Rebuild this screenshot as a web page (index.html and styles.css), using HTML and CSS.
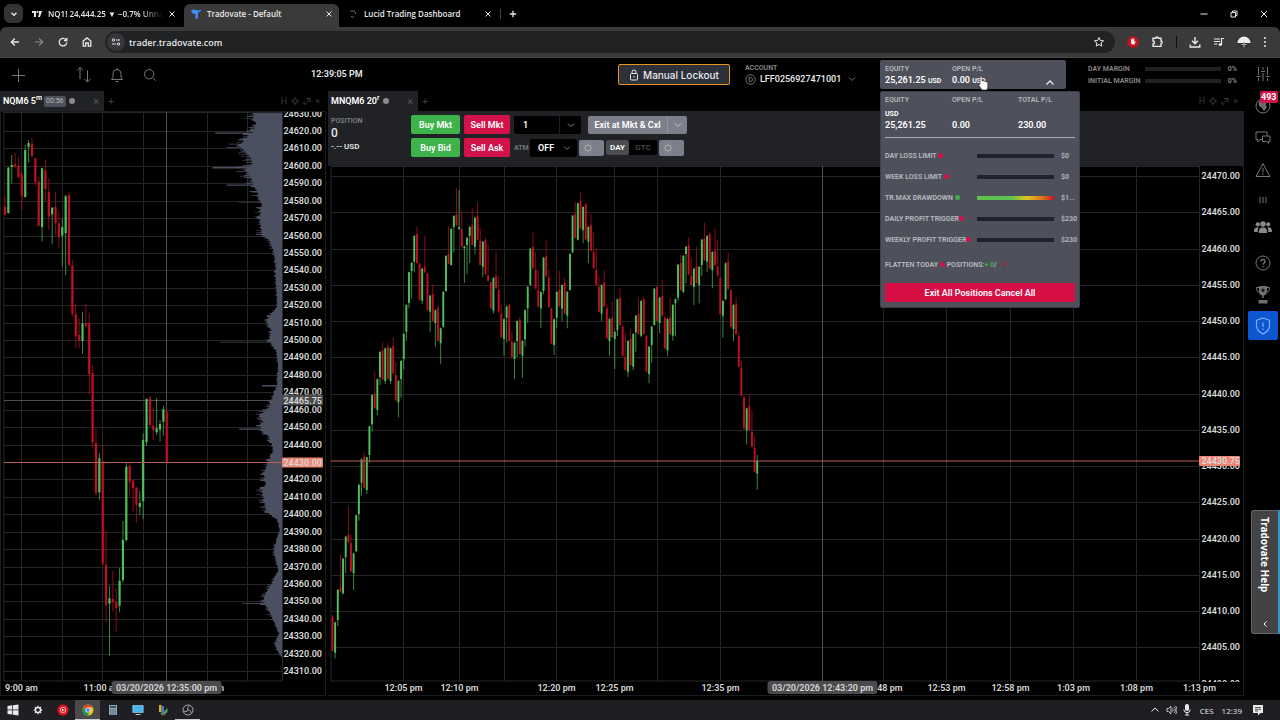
FILE: index.html
```html
<!DOCTYPE html>
<html lang="en">
<head>
  <meta charset="UTF-8">
  <title>Tradovate - Default</title>
  <link rel="stylesheet" href="styles.css">
</head>
<body>

<div class="tab-strip">
  <button class="tab-menu" aria-label="Search tabs"><svg width="8" height="8" viewBox="0 0 8 8"><path d="M1.5 2.8 4 5.2 6.500 2.8" stroke-width="1.400"/></svg></button>
  <div class="tab">
    <svg class="favicon" width="12" height="12" viewBox="0 0 12 12"><path class="solid" d="M1 3h4v6H3V5H1zM7.500 3H11L9 9H7l1-3z"/><circle class="solid" cx="6.300" cy="4" r="1"/></svg>
    <span class="tab-title faded">NQ1! 24,444.25 ▼ −0.7% Unna</span>
    <button class="tab-close" aria-label="Close tab"><svg width="8" height="8" viewBox="0 0 8 8"><path d="M1.500 1.500l5 5M6.500 1.500l-5 5"/></svg></button>
  </div>
  <div class="tab active">
    <svg class="favicon" width="12" height="12" viewBox="0 0 12 12"><path fill="#3f8df5" stroke="none" d="M1 2.500C3 1 5 1.500 6 2s3 .5 5-.5C11 3.500 9.500 4.500 8 4.500V9c0 1-1 2-2.500 2V6C3 6.500 1.500 5 1 2.500z"/></svg>
    <span class="tab-title">Tradovate - Default</span>
    <button class="tab-close" aria-label="Close tab"><svg width="8" height="8" viewBox="0 0 8 8"><path d="M1.500 1.500l5 5M6.500 1.500l-5 5"/></svg></button>
  </div>
  <div class="tab">
    <svg class="favicon" width="12" height="12" viewBox="0 0 12 12"><path stroke="#777" d="M3.500 3.500a3 3 0 0 1 5 2.500M4 8.500a3 3 0 0 0 3 .4"/></svg>
    <span class="tab-title">Lucid Trading Dashboard</span>
    <button class="tab-close" aria-label="Close tab"><svg width="8" height="8" viewBox="0 0 8 8"><path d="M1.500 1.500l5 5M6.500 1.500l-5 5"/></svg></button>
  </div>
  <button class="new-tab" aria-label="New tab"><svg width="8" height="8" viewBox="0 0 8 8"><path d="M4 .8v6.400M.8 4h6.400" stroke-width="1.300"/></svg></button>
  <div class="window-buttons">
    <button aria-label="Minimize"><svg width="8" height="8" viewBox="0 0 8 8"><path d="M.5 4h7"/></svg></button>
    <button aria-label="Restore"><svg width="8" height="8" viewBox="0 0 8 8"><path d="M1 2.500h4.500V7H1zM2.500 2.500V1H7v4.500H5.500"/></svg></button>
    <button aria-label="Close"><svg width="8" height="8" viewBox="0 0 8 8"><path d="M1 1l6 6M7 1L1 7"/></svg></button>
  </div>
</div>

<div class="browser-bar">
  <button aria-label="Back"><svg width="12" height="12" viewBox="0 0 12 12"><path d="M10 6H2.500M5.800 2.500 2.300 6l3.500 3.500" stroke-width="1.300"/></svg></button>
  <button class="dim" aria-label="Forward"><svg width="12" height="12" viewBox="0 0 12 12"><path d="M2 6h7.500M6.200 2.500 9.700 6 6.200 9.500" stroke-width="1.200"/></svg></button>
  <button aria-label="Reload"><svg width="12" height="12" viewBox="0 0 12 12"><path d="M9.300 4.200A3.800 3.800 0 1 0 9.800 6.500M9.800 1.800v2.800H7" stroke-width="1.300"/></svg></button>
  <button aria-label="Home"><svg width="12" height="12" viewBox="0 0 12 12"><path d="M2.200 5 6 1.900 9.800 5v5.200H7.300V7H4.700v3.200H2.200z" stroke-width="1.300"/></svg></button>
  <div class="address">
    <span class="site-info"><svg width="10" height="10" viewBox="0 0 10 10"><circle cx="2.500" cy="3" r="1.200"/><path d="M5 3h4M1 7h4"/><circle cx="7.500" cy="7" r="1.200"/></svg></span>
    <input type="text" value="trader.tradovate.com" aria-label="Address">
    <button aria-label="Bookmark"><svg width="12" height="12" viewBox="0 0 12 12"><path d="M6 1.500l1.300 3 3.200.3-2.400 2.100.7 3.200L6 8.400 3.200 10.100l.7-3.200L1.500 4.800l3.200-.3z"/></svg></button>
  </div>
  <div class="extensions">
    <button aria-label="Blocker"><svg width="12" height="12" viewBox="0 0 12 12"><path fill="#c4121d" stroke="none" d="M3.700.5h4.600l3.200 3.200v4.600l-3.200 3.200H3.700L.5 8.300V3.700z"/><path class="solid" d="M4 5V3.300h.8V2.700h.8v-.4h.8v.5h.9V6l.8-.9.7.5L7.500 8.500H4.800C4 7.500 4 6 4 5z"/></svg></button>
    <button aria-label="Extensions"><svg width="13" height="12" viewBox="0 0 13 12"><path d="M2 2.200h2.800a1.200 1.200 0 0 1 2.400 0H10V5a1.200 1.200 0 0 1 0 2.400v3H2V8a1.400 1.400 0 0 0 0-3z" stroke-width="1.400"/></svg></button>
    <span class="divider"></span>
    <button aria-label="Downloads"><svg width="12" height="12" viewBox="0 0 12 12"><path d="M6 1v6.500M3 4.800l3 3 3-3M1.200 8.500V11h9.600V8.500" stroke-width="1.400"/></svg></button>
    <button aria-label="Media"><svg width="12" height="12" viewBox="0 0 12 12"><path d="M1 3h6M1 5.500h6M1 8h3.500M8.500 8.500V2.500H11" stroke-width="1.200"/><circle class="solid" cx="7.300" cy="8.600" r="1.500"/></svg></button>
    <button aria-label="Profile"><svg width="14" height="14" viewBox="0 0 14 14"><circle cx="7" cy="7" r="6.500" fill="#333" stroke="none"/><path fill="#eee" stroke="none" d="M.5 8a6.500 6.500 0 0 1 13 0z"/><path d="M7 7v5.500M4.500 9.500h5" stroke="#aaa"/></svg></button>
    <button aria-label="Menu"><svg width="4" height="12" viewBox="0 0 4 12"><circle class="solid" cx="2" cy="2" r="1"/><circle class="solid" cx="2" cy="6" r="1"/><circle class="solid" cx="2" cy="10" r="1"/></svg></button>
  </div>
</div>

<div class="app">
  <main class="workspace">
    <header class="app-header">
      <button class="tool add" aria-label="Add module"><svg width="15" height="15" viewBox="0 0 15 15"><path d="M7.500 1v13M1 7.500h13"/></svg></button>
      <button class="tool" aria-label="Orders"><svg width="16" height="18" viewBox="0 0 16 18"><path d="M4 13V1.500M1 4.500l3-3 3 3M11.500 4.500V16M8.500 13l3 3 3-3"/></svg></button>
      <button class="tool" aria-label="Alerts"><svg width="14" height="16" viewBox="0 0 14 16"><path d="M1.500 12.500 3 10.500V6.500a4 4 0 0 1 8 0v4l1.500 2zM7 2.500V1M5.500 14.500h3"/></svg></button>
      <button class="tool" aria-label="Search"><svg width="14" height="14" viewBox="0 0 14 14"><circle cx="6.200" cy="6.200" r="4.700"/><path d="M9.700 9.700l3 3"/></svg></button>
      <time class="clock">12:39:05 PM</time>
      <button class="lockout"><svg width="10" height="12" viewBox="0 0 10 12"><rect x="1.500" y="4.500" width="7" height="6.500" rx="1"/><path d="M3 4.500V3a2 2 0 0 1 4 0v1.500M5 7v1.500"/></svg>Manual Lockout</button>
      <div class="account">
        <label for="account">ACCOUNT</label>
        <div class="account-row">
          <svg width="11" height="11" viewBox="0 0 11 11"><circle cx="5.500" cy="5.500" r="4.700"/><path d="M4.200 3.500h1.300a2 2 0 0 1 0 4H4.200z"/></svg>
          <select id="account"><option>LFF0256927471001</option></select>
          <svg class="chev" width="8" height="6" viewBox="0 0 8 6"><path d="M1 1.500l3 3 3-3"/></svg>
        </div>
      </div>
      <div class="equity-wrap">
        <button class="equity" aria-expanded="true">
          <span class="equity-cell"><small>EQUITY</small><b>25,261.25 <i>USD</i></b></span>
          <span class="equity-cell"><small>OPEN P/L</small><b>0.00 <i>USD</i></b></span>
          <svg width="10" height="7" viewBox="0 0 10 7"><path d="M1.500 5.500 5 2l3.500 3.500" stroke-width="1.300"/></svg>
        </button>
        <svg class="pointer" width="12" height="15" viewBox="0 0 12 15"><path fill="#fff" stroke="#222" stroke-width=".6" d="M2 1.500c0-1.200 2-1.200 2 0V5c.5-.5 1.800-.4 2 .4.600-.4 1.700-.2 1.900.6.700-.3 1.800 0 1.900 1v3.500L9 14H4L1 9.500C.3 8.500 1.200 7.700 2 8.400z"/></svg>
        <section class="equity-menu">
          <div class="totals">
            <span>EQUITY</span><span>OPEN P/L</span><span>TOTAL P/L</span>
            <b class="currency">USD</b>
            <b>25,261.25</b><b>0.00</b><b>230.00</b>
          </div>
          <div class="limits">
            <div class="limit"><span>DAY LOSS LIMIT <i class="dot"></i></span><span class="bar"></span><span>$0</span></div>
            <div class="limit"><span>WEEK LOSS LIMIT <i class="dot"></i></span><span class="bar"></span><span>$0</span></div>
            <div class="limit"><span>TR.MAX DRAWDOWN <i class="dot on"></i></span><span class="bar heat"></span><span>$1...</span></div>
            <div class="limit"><span>DAILY PROFIT TRIGGER<i class="dot"></i></span><span class="bar"></span><span>$230</span></div>
            <div class="limit"><span>WEEKLY PROFIT TRIGGER<i class="dot"></i></span><span class="bar"></span><span>$230</span></div>
          </div>
          <p class="flatten">FLATTEN TODAY <i class="dot"></i> POSITIONS:<em class="up">+ 0</em>/ <em class="down">- 0</em></p>
          <button class="exit-all">Exit All Positions Cancel All</button>
        </section>
      </div>
      <div class="margins">
        <div class="margin-row"><span>DAY MARGIN</span><span class="bar"></span><span>0%</span></div>
        <div class="margin-row"><span>INITIAL MARGIN</span><span class="bar"></span><span>0%</span></div>
      </div>
    </header>

    <div class="panels">
      <section class="panel panel-left">
        <div class="panel-tabs">
          <div class="panel-tab"><b>NQM6 5<sup>m</sup></b><span class="countdown">00:56</span><i class="status"></i><button aria-label="Close chart">×</button></div>
          <button class="add-tab" aria-label="Add chart">+</button>
          <div class="panel-tools"><button aria-label="History">H</button><button aria-label="Settings"><svg width="8" height="8" viewBox="0 0 8 8"><circle cx="4" cy="4" r="2.300"/><path d="M4 0v1.500M4 6.500V8M0 4h1.500M6.500 4H8"/></svg></button><button aria-label="Detach"><svg width="8" height="8" viewBox="0 0 8 8"><path d="M3 1.500h4V5M7 1.500 3.500 5M1 4.500V7h2.500"/></svg></button><button aria-label="Close panel">×</button></div>
        </div>
        <div class="chart" id="chart-nq"></div>
      </section>

      <section class="panel panel-right">
        <div class="panel-tabs">
          <div class="panel-tab short"><b>MNQM6 20<sup>r</sup></b><i class="status"></i><button aria-label="Close chart">×</button></div>
          <button class="add-tab" aria-label="Add chart">+</button>
          <div class="panel-tools"><button aria-label="History">H</button><button aria-label="Settings"><svg width="8" height="8" viewBox="0 0 8 8"><circle cx="4" cy="4" r="2.300"/><path d="M4 0v1.500M4 6.500V8M0 4h1.500M6.500 4H8"/></svg></button><button aria-label="Detach"><svg width="8" height="8" viewBox="0 0 8 8"><path d="M3 1.500h4V5M7 1.500 3.500 5M1 4.500V7h2.500"/></svg></button><button aria-label="Close panel">×</button></div>
        </div>
        <div class="order-bar">
          <div class="position"><small>POSITION</small><b>0</b><span>-.-- USD</span></div>
          <div class="orders">
            <div class="order-row">
              <button class="buy">Buy Mkt</button>
              <button class="sell">Sell Mkt</button>
              <div class="qty"><input type="text" value="1" aria-label="Quantity"><button aria-label="Quantity presets"><svg width="8" height="6" viewBox="0 0 8 6"><path d="M1 1.500l3 3 3-3"/></svg></button></div>
              <div class="exit"><button>Exit at Mkt &amp; Cxl</button><button class="more" aria-label="More exits"><svg width="8" height="6" viewBox="0 0 8 6"><path d="M1 1.500l3 3 3-3"/></svg></button></div>
            </div>
            <div class="order-row">
              <button class="buy">Buy Bid</button>
              <button class="sell">Sell Ask</button>
              <div class="atm">
                <label for="atm">ATM</label>
                <div class="atm-select"><select id="atm"><option>OFF</option></select><svg class="chev" width="8" height="6" viewBox="0 0 8 6"><path d="M1 1.500l3 3 3-3"/></svg></div>
                <button class="gear" aria-label="ATM settings"><svg width="10" height="10" viewBox="0 0 10 10"><circle cx="5" cy="5" r="2.800"/><path d="M5 .5V2M5 8v1.500M.5 5H2M8 5h1.500M1.800 1.800l1 1M7.200 7.200l1 1M8.200 1.800l-1 1M2.800 7.200l-1 1"/></svg></button>
                <div class="tif"><button class="picked">DAY</button><button>GTC</button></div>
                <button class="gear" aria-label="Order settings"><svg width="10" height="10" viewBox="0 0 10 10"><circle cx="5" cy="5" r="2.800"/><path d="M5 .5V2M5 8v1.500M.5 5H2M8 5h1.500M1.800 1.800l1 1M7.200 7.200l1 1M8.200 1.800l-1 1M2.800 7.200l-1 1"/></svg></button>
              </div>
            </div>
          </div>
        </div>
        <div class="chart" id="chart-mnq"></div>
      </section>
    </div>
  </main>

  <nav class="side">
    <button aria-label="Preferences"><svg width="14" height="16" viewBox="0 0 14 16"><path d="M2.500 1v8M2.500 12v3M7 1v3M7 7v8M11.500 1v8M11.500 12v3M.5 10.500h4M5 5.500h4M9.500 10.500h4"/></svg></button>
    <button aria-label="News"><svg width="16" height="16" viewBox="0 0 16 16"><circle cx="8" cy="8" r="7"/><path fill="#6a6a6a" d="M4 4l4-1 3 1.500L10 7l1.500 2L9 12.500 7.500 9.500 4.500 8z"/></svg><span class="badge">493</span></button>
    <button aria-label="Chat"><svg width="16" height="14" viewBox="0 0 16 14"><path d="M7 8.500H5L3 11V8.500H1V1h11v3.500M7.500 5H15v5.500h-1.500v2L11.500 10.500h-4z"/></svg></button>
    <button aria-label="Warnings"><svg width="16" height="16" viewBox="0 0 16 16"><path d="M8 1.500 15 14.500H1zM8 6v4.500M8 11.500v1.500"/></svg></button>
    <button class="low" aria-label="Columns"><svg width="8" height="8" viewBox="0 0 8 8"><path d="M1 1v6M4 1v6M7 1v6"/></svg></button>
    <button class="low" aria-label="Community"><svg width="18" height="12" viewBox="0 0 18 12"><g fill="#8a8a8a" stroke="none"><circle cx="9" cy="3" r="2.700"/><circle cx="3.800" cy="3.300" r="2.100"/><circle cx="14.200" cy="3.300" r="2.100"/><path d="M4.800 12c0-4 1-5.500 4.200-5.500s4.200 1.500 4.200 5.500zM0 11c0-3.500 1-4.800 4.500-4.800C3.800 7.500 3.800 9 3.800 11zM18 11c0-3.500-1-4.800-4.500-4.800.7 1.300.7 2.800.7 4.800z"/></g></svg></button>
    <button class="mid" aria-label="Help"><svg width="16" height="16" viewBox="0 0 16 16"><circle cx="8" cy="8" r="7"/><path d="M6 6.500a2 2 0 1 1 2.800 1.800C8 8.700 8 9 8 9.800M8 11v1.300" stroke-width="1.300"/></svg></button>
    <button class="cup" aria-label="Leaderboard"><svg width="16" height="19" viewBox="0 0 16 19"><g fill="#6f6f6f" stroke="none"><path d="M4 1h8v5.500a4 4 0 0 1-3.200 4V13H7.200v-2.500A4 4 0 0 1 4 6.500zM3.500 15h9v3.500h-9z"/></g><path d="M4 2.500H1.500c0 3 .8 4.500 3 4.700M12 2.500h2.500c0 3-.8 4.500-3 4.700"/><path fill="#111" stroke="none" d="M8 3l.7 1.400 1.500.2-1.100 1 .3 1.500L8 6.400l-1.400.7.3-1.500-1.100-1 1.500-.2z"/></svg></button>
    <button class="shield" aria-label="Risk"><svg width="16" height="18" viewBox="0 0 16 18"><path d="M8 1l6.500 2.300v5.200c0 4-2.500 6.500-6.500 8.500-4-2-6.500-4.500-6.500-8.500V3.300zM8 5.500v4.500M8 11.500V13" stroke-width="1.200"/></svg></button>
  </nav>
  <button class="help-tab"><span>Tradovate Help</span><svg width="8" height="8" viewBox="0 0 8 8"><path d="M5.500 1.500 3 4l2.500 2.500"/></svg></button>
</div>

<footer class="taskbar">
  <button aria-label="Start"><svg width="12" height="12" viewBox="0 0 12 12"><path class="solid" d="M.5 2 5.300 1.300v4.300H.5zM6 1.200 11.500.5v5.100H6zM.5 6.300h4.800v4.300L.5 10zM6 6.300h5.500v5.200L6 10.700z"/></svg></button>
  <button aria-label="Settings"><svg width="10" height="10" viewBox="0 0 10 10"><circle cx="5" cy="5" r="2.500" stroke-width="1.400"/><path d="M5 .8v1.500M5 7.700v1.500M.8 5h1.500M7.700 5h1.500M2 2l1 1M7 7l1 1M8 2 7 3M3 7 2 8" stroke-width="1.300"/></svg></button>
  <button aria-label="Music"><svg width="12" height="12" viewBox="0 0 12 12"><circle cx="6" cy="6" r="5.500" fill="#e8101c" stroke="none"/><circle cx="6" cy="6" r="2.700" stroke-width=".8"/><path class="solid" d="M5 4.500 7.500 6 5 7.500z"/></svg></button>
  <button class="current" aria-label="Chrome"><svg width="12" height="12" viewBox="0 0 12 12"><circle cx="6" cy="6" r="5.500" fill="#f4c20d" stroke="none"/><path fill="#db4437" stroke="none" d="M1.200 3.300A5.500 5.500 0 0 1 10.800 3.300H6L3.700 7.300z"/><path fill="#0f9d58" stroke="none" d="M1.200 3.300A5.500 5.500 0 0 0 5.700 11.500L8.200 7.300H3.700z"/><circle cx="6" cy="6" r="2.300" fill="#4285f4" stroke="#fff" stroke-width=".8"/></svg></button>
  <button aria-label="Calculator"><svg width="10" height="12" viewBox="0 0 10 12"><rect x="1" y="1" width="8" height="10" fill="#8fa5b2" stroke="none"/><path d="M2 3h6" stroke="#263b47" stroke-width="1.500"/><path d="M2 6h6M2 8h6M2 10h6" stroke="#3d6478" stroke-dasharray="1.500 .7"/></svg></button>
  <button aria-label="Computer"><svg width="12" height="12" viewBox="0 0 12 12"><path fill="#46b7ee" stroke="#a8dcf5" stroke-width=".6" d="M.8 1.500h10.400v7H.8z"/><path d="M3.500 10.500h5" stroke="#b9c9d1"/></svg></button>
  <button aria-label="Charts"><svg width="12" height="12" viewBox="0 0 12 12"><path fill="#e1a63c" stroke="none" d="M2 1h2.500v7H2z"/><path fill="#3f7fb6" stroke="none" d="M4.500 2h2.500v8H4.500z"/><path fill="#52a55c" stroke="none" d="M7 7.500 10.500 4v4L7 11.500z"/><path fill="#e1c43c" stroke="none" d="M3 8l4 3.500L5 11z"/></svg></button>
  <button class="open" aria-label="Recorder"><svg width="12" height="12" viewBox="0 0 12 12"><circle cx="6" cy="6" r="5" stroke="#aaa"/><path d="M6 6c-1-2 0-3.500 1.500-4M6 6c2 0 3.200 1 3 3M6 6c-1 2-3 2-4 1" stroke="#aaa"/></svg></button>
  <div class="tray">
    <button aria-label="Hidden icons"><svg width="10" height="8" viewBox="0 0 10 8"><path d="M1.500 5.500 5 2l3.500 3.500"/></svg></button>
    <button aria-label="Volume"><svg width="11" height="10" viewBox="0 0 11 10"><path d="M1 3.500h1.500L5 1.200v7.600L2.500 6.500H1zM6.500 3.500a2 2 0 0 1 0 3M8 2a4 4 0 0 1 0 6M9.500 1a6 6 0 0 1 0 8" stroke-width=".8"/></svg></button>
    <button aria-label="Microphone"><svg width="8" height="12" viewBox="0 0 8 12"><rect class="solid" x="2" y="0" width="4" height="7" rx="2"/><path d="M.8 5.500a3.200 3.200 0 0 0 6.400 0M4 8.700V11M2 11h4"/></svg></button>
    <span>CES</span>
    <time>12:39</time>
    <button aria-label="Notifications"><svg width="12" height="12" viewBox="0 0 12 12"><path class="solid" d="M1 1h10v8H8.500L6 11.500V9H1z"/><path d="M3 3.500h6M3 5.300h6M3 7h3" stroke="#333" stroke-width=".8"/></svg></button>
  </div>
</footer>

<script src="chart.js"></script>
</body>
</html>
```

FILE: styles.css
```css
* {
  box-sizing: border-box;
}
body {
  margin: 0;
  height: 100vh;
  display: flex;
  flex-direction: column;
  overflow: hidden;
  background: #000;
  color: #e8e8e8;
  font-family: Roboto, "Liberation Sans", sans-serif;
  font-size: 9px;
}
button, input, select {
  font: inherit;
  color: inherit;
  background: none;
  border: 0;
  padding: 0;
  margin: 0;
}
button {
  display: flex;
  align-items: center;
  justify-content: center;
  cursor: pointer;
  white-space: nowrap;
}
select {
  appearance: none;
}
input {
  min-width: 0;
}
svg {
  display: block;
  flex: none;
  fill: none;
  stroke: currentColor;
}
.solid {
  fill: currentColor;
  stroke: none;
}

/* browser */
.tab-strip {
  display: flex;
  align-items: center;
  height: 27px;
  flex: none;
  padding-left: 4px;
  font-family: "Open Sans", sans-serif;
  font-size: 8px;
  font-weight: 600;
}
.tab-menu {
  width: 19px;
  height: 19px;
  border-radius: 6px;
  background: #333;
}
.tab {
  display: flex;
  align-items: center;
  gap: 5px;
  width: 161px;
  height: 23px;
  margin-top: 4px;
  padding: 0 8px 4px;
}
.tab.active {
  background: #3a3a3a;
  border-radius: 6px 6px 0 0;
  width: 155px;
  padding: 0 6px 4px;
}
.tab-title {
  flex: 1;
  overflow: hidden;
  white-space: nowrap;
}
.faded {
  mask-image: linear-gradient(90deg, #000 80%, transparent);
}
.new-tab {
  padding-left: 8px;
  border-left: 1px solid #444;
  height: 10px;
}
.window-buttons {
  display: flex;
  gap: 22px;
  margin-left: auto;
  padding-right: 12px;
}
.browser-bar {
  display: flex;
  align-items: center;
  gap: 12px;
  height: 31px;
  flex: none;
  padding: 0 13px 0 9px;
  background: #3a3a3a;
  border-bottom: 1px solid #4b4b4b;
  border-radius: 6px 6px 0 0;
}
.dim {
  color: #888;
}
.address {
  display: flex;
  align-items: center;
  flex: 1;
  height: 22px;
  border-radius: 11px;
  background: #202224;
  padding: 0 10px 0 2px;
}
.site-info {
  padding: 4px;
  border-radius: 50%;
  background: #35373a;
}
.address input {
  flex: 1;
  margin-left: 4px;
  font-family: "Open Sans", sans-serif;
  font-size: 9px;
  font-weight: 600;
}
.extensions {
  display: flex;
  align-items: center;
  gap: 12px;
}
.extensions .divider {
  width: 1px;
  height: 12px;
  background: #111;
}

/* app header */
.app {
  position: relative;
  display: flex;
  flex: 1;
  min-height: 0;
}
.workspace {
  flex: 1;
  min-width: 0;
  display: flex;
  flex-direction: column;
}
.app-header {
  display: flex;
  align-items: flex-start;
  height: 33px;
  flex: none;
  padding: 2px 7px 0 11px;
}
.tool {
  width: 15px;
  height: 30px;
  margin-right: 18px;
  color: #777;
}
.tool.add {
  margin-right: 50px;
}
.clock {
  margin-left: 136px;
  font-size: 9px;
  font-weight: 600;
  line-height: 29px;
}
.lockout {
  gap: 4px;
  width: 112px;
  height: 21px;
  margin: 4px 15px 0 auto;
  border: 1px solid #e8931f;
  border-radius: 2px;
  background: #2d313c;
  font-family: Inter, sans-serif;
  font-size: 10px;
  font-weight: 500;
}
.account {
  width: 111px;
  margin-right: 24px;
  padding-top: 4px;
}
.account label, .equity small, .totals span, .position small {
  display: block;
  font-size: 7px;
  line-height: 9px;
  font-weight: 600;
  color: #888;
}
.account-row {
  display: flex;
  align-items: center;
  gap: 4px;
  color: #777;
}
.account-row select {
  width: 86px;
  font-size: 9px;
  line-height: 12px;
  font-weight: 500;
  color: #eee;
}
.equity-wrap {
  position: relative;
  margin-right: 22px;
}
.equity {
  width: 186px;
  height: 29px;
  padding: 3px 11px 0 5px;
  border-radius: 2px;
  background: #4e515b;
  justify-content: flex-start;
  text-align: left;
}
.equity-cell {
  width: 67px;
}
.equity small, .totals span {
  color: #b4b6bc;
}
.equity b {
  display: block;
  font-size: 9px;
  line-height: 13px;
  font-weight: 600;
  color: #fff;
}
.equity i {
  font-size: 7px;
  font-style: normal;
}
.equity svg {
  margin: 12px 0 0 auto;
}
.pointer {
  position: absolute;
  left: 98px;
  top: 16px;
  z-index: 5;
}
.equity-menu {
  position: absolute;
  left: 0;
  top: 31px;
  width: 200px;
  z-index: 4;
  padding: 4px 4px 5px;
  border-radius: 2px;
  background: #4e515b;
  border: 1px solid #3e4047;
}
.totals {
  display: grid;
  grid-template-columns: 67px 66px 1fr;
  padding-bottom: 6px;
  border-bottom: 1px solid #a9abb2;
}
.totals b {
  font-size: 9px;
  line-height: 12px;
  font-weight: 600;
  color: #fff;
}
.totals .currency {
  grid-column: 1 / -1;
  margin-top: 4px;
  font-size: 7px;
  line-height: 10px;
  font-weight: 700;
}
.limits {
  padding-top: 7px;
}
.limit {
  display: grid;
  grid-template-columns: 92px 77px 1fr;
  align-items: center;
  height: 21px;
  font-size: 7px;
  font-weight: 600;
  color: #b9bbc1;
  white-space: nowrap;
}
.limit span:last-child {
  padding-left: 7px;
}
.bar {
  height: 4px;
  background: #20222c;
}
.heat {
  background: linear-gradient(90deg, #5fc24e 45%, #e0c51c 65%, #e0731c 85%, #c0162a);
}
.dot {
  display: inline-block;
  width: 5px;
  height: 5px;
  border-radius: 50%;
  background: #d31249;
}
.dot.on {
  background: #3bb04a;
}
.flatten {
  margin: 10px 0 13px;
  font-size: 7px;
  line-height: 10px;
  font-weight: 600;
  color: #b9bbc1;
}
.flatten em {
  font-style: normal;
}
.up {
  color: #3bb04a;
}
.down {
  color: #a3283c;
}
.exit-all {
  width: 100%;
  height: 19px;
  background: #d70f45;
  color: #fff;
  font-size: 9px;
  font-weight: 600;
}
.margins {
  width: 149px;
  padding-top: 3px;
}
.margin-row {
  display: flex;
  align-items: center;
  height: 12px;
  font-size: 7px;
  font-weight: 600;
  color: #888;
}
.margin-row span:first-child {
  width: 57px;
}
.margin-row .bar {
  flex: 1;
  background: #202124;
}
.margin-row span:last-child {
  width: 16px;
  text-align: right;
}

/* panels */
.panels {
  display: flex;
  gap: 2px;
  flex: 1;
  min-height: 0;
  padding-bottom: 4px;
}
.panel {
  display: flex;
  flex-direction: column;
  min-width: 0;
}
.panel-left {
  flex: 326;
}
.panel-right {
  flex: 916;
}
.panel-tabs {
  display: flex;
  height: 20px;
  flex: none;
}
.panel-tab {
  display: flex;
  align-items: center;
  gap: 2px;
  width: 104px;
  padding: 0 5px 0 3px;
  background: #212226;
}
.panel-tab.short {
  width: 90px;
}
.panel-tab b {
  font-size: 9px;
  font-weight: 600;
  color: #fff;
  white-space: nowrap;
}
.panel-tab sup {
  font-size: 7px;
  line-height: 0;
}
.panel-tab button, .add-tab {
  margin-left: auto;
  color: #55565a;
  font-size: 11px;
}
.add-tab {
  margin-left: 4px;
  color: #3c3c3e;
}
.countdown {
  padding: 0 2px;
  border-radius: 2px;
  background: #4e515b;
  color: #b4b6bc;
  font-size: 7px;
  line-height: 11px;
}
.status {
  width: 6px;
  height: 6px;
  margin-left: 1px;
  border-radius: 50%;
  background: #8b8b8d;
}
.panel-tools {
  display: flex;
  gap: 4px;
  margin-left: auto;
  padding-right: 6px;
  color: #3c3c3c;
}
.order-bar {
  display: flex;
  height: 54px;
  flex: none;
  padding: 4px 3px 0;
  background: #212226;
}
.position {
  width: 80px;
}
.position small {
  margin-top: 2px;
  font-weight: 500;
}
.position b {
  display: block;
  font-size: 12px;
  line-height: 15px;
  font-weight: 500;
}
.position span {
  font-size: 8px;
  line-height: 11px;
  font-weight: 600;
}
.orders {
  display: flex;
  flex-direction: column;
  gap: 4px;
}
.order-row {
  display: flex;
  align-items: center;
  gap: 4px;
  color: #fff;
  font-size: 9px;
  font-weight: 600;
}
.buy, .sell {
  width: 49px;
  height: 19px;
  border-radius: 2px;
  background: #3eb34c;
}
.sell {
  width: 46px;
  background: #d31249;
}
.qty {
  display: flex;
  width: 67px;
  height: 18px;
  border-radius: 2px;
  background: #000;
}
.qty input {
  flex: 1;
  padding-left: 9px;
}
.qty button, .more {
  width: 22px;
  color: #888;
  border-left: 1px solid #212226;
}
.exit {
  display: flex;
  height: 18px;
  margin-left: 3px;
  border-radius: 2px;
  background: #7d808a;
}
.exit button:first-child {
  width: 79px;
}
.exit .more {
  width: 20px;
  color: #c4c6cc;
  border-color: #93959d;
}
.atm {
  display: flex;
  align-items: center;
  gap: 2px;
}
.atm label {
  width: 14px;
  font-size: 7px;
  color: #77787c;
}
.atm-select {
  display: flex;
  align-items: center;
  width: 47px;
  height: 18px;
  padding: 0 6px 0 8px;
  border-radius: 2px;
  background: #000;
}
.atm-select select {
  flex: 1;
}
.chev {
  color: #777;
  pointer-events: none;
}
.gear {
  width: 25px;
  height: 16px;
  padding-right: 8px;
  border-radius: 2px;
  background: #7d808a;
  color: #a5a7af;
}
.tif {
  display: flex;
  width: 51px;
  height: 15px;
  border-radius: 2px;
  background: #000;
  font-size: 8px;
}
.tif button {
  flex: 1;
  color: #4a4a4c;
}
.tif .picked {
  flex: none;
  width: 23px;
  border-radius: 2px;
  background: #4b4c50;
  color: #fff;
}
.chart {
  flex: 1;
  min-height: 0;
  overflow: hidden;
  border: 1px solid #1b1c1e;
}
.panel-right .chart {
  border-left: 0;
}

/* chart drawing */
.chart svg {
  stroke: none;
}
.grid {
  stroke: #262626;
}
.cross {
  stroke: #505050;
}
.last {
  stroke: #b5615a;
}
.candle-up {
  stroke: #4fc15a;
}
.candle-down {
  stroke: #c20f22;
}
.wick {
  opacity: .7;
}
.profile {
  fill: #4a5060;
}
.axis-bg {
  fill: #000;
}
.chart text {
  fill: #d8d8d8;
  font-size: 9px;
  font-weight: 600;
}
.tag-last {
  fill: #ee8474;
}
.tag-cross {
  fill: #4b4b4d;
}

/* right sidebar */
.side {
  width: 36px;
  flex: none;
  padding: 0 2px 0 4px;
  color: #777;
}
.side button {
  position: relative;
  width: 30px;
  height: 32px;
}
.side .low {
  height: 27px;
}
.side .mid {
  margin-top: 7px;
}
.side .cup {
  height: 30px;
}
.side .shield {
  height: 29px;
  margin-top: 2px;
  border-radius: 2px;
  background: #0c56d0;
  color: #7fb0ff;
}
.badge {
  position: absolute;
  left: 12px;
  top: 1px;
  padding: 0 1px;
  border-radius: 2px;
  background: #d31249;
  color: #fff;
  font-size: 9px;
  line-height: 12px;
  font-weight: 700;
}
.help-tab {
  position: absolute;
  right: 0;
  bottom: 66px;
  width: 29px;
  height: 124px;
  flex-direction: column;
  justify-content: space-between;
  padding: 6px 0 5px;
  border: 1px solid #666;
  border-right: 2px solid #2f9cc9;
  border-radius: 3px 0 0 3px;
  background: #434345;
  color: #fff;
  font-family: "Noto Sans", sans-serif;
  font-size: 10px;
  font-weight: 700;
}
.help-tab span {
  writing-mode: vertical-rl;
}

/* taskbar */
.taskbar {
  display: flex;
  align-items: center;
  height: 20px;
  flex: none;
  background: #1f1f23;
  font-family: "Open Sans", sans-serif;
  font-size: 8px;
}
.taskbar > button {
  width: 25px;
  height: 20px;
}
.taskbar .current {
  background: #4a4a4d;
}
.taskbar .current, .taskbar .open {
  border-bottom: 1px solid #ccc;
}
.tray {
  display: flex;
  align-items: center;
  gap: 6px;
  margin-left: auto;
  padding-right: 16px;
}
.tray span {
  margin-left: 3px;
}
.tray time {
  margin: 0 4px 0 2px;
}
```

FILE: chart.js
```js
// Candle rows: [up, body top, body bottom, high, low], in thirds of a pixel
const UNIT = 3;

const nq = [
  [0,305,328,272,332],[1,188,324,185,326],[1,180,186,150,235],[0,178,185,145,190],[0,182,216,155,220],
  [0,207,273,200,315],[1,135,276,120,278],[1,114,126,105,172],[0,116,153,98,158],[0,160,232,158,243],
  [0,230,362,215,365],[1,190,366,188,410],[0,196,252,165,290],[0,260,335,220,375],[1,308,328,306,417],
  [0,306,355,260,390],[0,355,396,320,430],[1,366,392,340,485],[1,274,384,270,510],[0,270,480,262,485],
  [0,482,626,465,635],[0,628,694,595,730],[0,690,706,640,728],[1,655,708,620,747],[0,655,662,597,668],
  [0,655,808,625,870],[0,804,1012,780,1028],[0,1014,1165,970,1172],[1,1060,1162,1045,1185],[0,1070,1376,1020,1383],
  [0,1380,1500,1275,1552],[1,1480,1496,1442,1652],[0,1482,1492,1398,1520],[0,1492,1508,1450,1580],[1,1427,1502,1388,1522],
  [1,1305,1425,1248,1432],[1,1085,1305,1072,1310],[0,1083,1130,1072,1175],[0,1127,1150,1125,1220],[0,1148,1200,1145,1252],
  [1,1194,1206,1158,1230],[1,1005,1188,985,1242],[1,882,1012,880,1022],[0,880,960,872,965],[0,962,976,905,1005],
  [1,970,982,880,990],[1,957,974,945,1010],[1,913,950,902,992],[0,920,1072,915,1075]
];

const mnq = [
  [0,1355,1457,1350,1460],[1,1372,1463,1370,1480],[1,1275,1365,1272,1383],[0,1268,1280,1168,1282],[1,1181,1285,1179,1289],
  [1,1115,1177,1113,1225],[0,1110,1132,1023,1135],[0,1135,1219,1110,1221],[1,1165,1225,1163,1275],[1,1051,1159,1048,1161],
  [1,959,1047,957,1067],[1,883,953,880,992],[0,875,969,860,971],[1,877,975,875,987],[1,784,870,782,893],
  [1,690,778,688,800],[0,686,728,620,732],[1,643,735,640,750],[1,561,636,558,660],[0,556,642,532,646],
  [1,550,648,548,657],[0,545,642,533,644],[1,550,648,548,658],[0,543,625,516,628],[0,630,706,590,710],
  [1,648,712,645,757],[1,588,642,585,698],[1,507,582,504,614],[1,420,500,418,528],[1,322,414,320,430],
  [1,294,318,290,400],[1,213,290,210,322],[0,207,294,184,297],[0,296,404,293,407],[1,311,407,309,418],
  [0,305,322,213,324],[0,326,434,324,437],[1,392,440,390,502],[0,387,468,358,470],[1,436,474,433,545],
  [0,430,528,420,530],[1,490,535,488,597],[1,381,485,378,488],[1,273,378,270,380],[0,267,297,184,298],
  [1,192,300,188,302],[1,153,186,150,262],[0,148,180,70,184],[1,186,192,75,194],[0,192,245,136,248],
  [1,244,250,242,354],[1,218,240,216,328],[1,186,213,183,294],[0,180,240,130,242],[1,158,245,155,268],
  [0,152,224,112,226],[0,228,300,190,302],[1,230,305,228,337],[0,225,327,218,330],[0,332,348,240,350],
  [0,352,430,350,433],[1,339,437,336,446],[0,334,370,262,372],[0,375,440,333,444],[0,445,517,420,519],
  [1,463,522,460,572],[1,425,458,422,532],[0,420,528,417,530],[0,530,577,500,580],[1,534,582,530,642],
  [1,468,528,466,577],[0,464,567,457,569],[1,528,572,525,638],[1,436,523,433,545],[1,365,430,363,474],
  [1,251,360,249,362],[0,246,310,202,314],[0,315,370,262,374],[0,375,425,315,428],[1,381,430,379,490],
  [1,278,378,276,388],[0,273,332,223,338],[0,338,426,315,428],[0,430,535,428,537],[1,463,540,460,570],
  [1,381,458,379,490],[0,375,424,318,427],[1,360,431,358,468],[0,354,446,338,448],[1,381,452,378,490],
  [1,267,375,265,377],[1,152,262,150,264],[0,147,218,110,220],[1,115,224,113,226],[0,108,190,82,193],
  [1,126,195,124,235],[0,118,223,114,226],[1,186,230,183,294],[0,180,257,147,260],[0,262,310,200,313],
  [0,315,360,250,363],[0,366,440,334,443],[1,360,446,358,468],[0,352,424,316,427],[0,430,520,416,524],
  [1,462,528,460,572],[0,458,516,408,519],[1,501,522,498,612],[1,403,496,400,513],[0,398,480,370,482],
  [0,485,572,480,574],[0,576,615,505,618],[1,528,620,526,636],[0,522,600,490,603],[1,507,605,504,615],
  [1,452,502,450,560],[0,447,507,398,510],[1,408,512,405,517],[0,403,507,395,510],[0,512,620,510,623],
  [1,545,627,542,655],[1,485,540,482,594],[1,371,480,369,482],[0,366,468,362,470],[1,398,474,395,505],
  [0,393,452,345,456],[0,457,550,455,553],[1,462,556,460,572],[0,458,508,398,510],[1,420,512,417,527],
  [1,403,415,400,514],[1,299,398,297,407],[0,294,375,270,378],[1,273,381,270,384],[1,245,267,243,355],
  [0,240,328,218,331],[0,332,360,280,362],[1,311,366,308,420],[0,304,354,245,357],[1,306,360,303,415],
  [1,224,300,222,333],[0,220,285,173,288],[1,213,290,210,322],[0,207,310,203,313],[1,261,316,259,370],
  [0,257,300,190,303],[0,304,332,225,335],[0,338,447,336,449],[1,408,452,405,518],[1,295,403,292,405],
  [0,290,371,262,374],[0,376,485,374,488],[1,420,492,417,528],[0,416,507,397,510],[0,513,605,500,608],
  [0,609,692,588,694],[0,697,790,694,794],[1,730,795,728,838],[0,724,795,686,798],[0,801,845,736,847],
  [0,849,920,812,923],[1,888,926,870,974]
];

// Volume profile outline: [y, width], same units
const profile = [
  [20,88],[35,105],[50,92],[75,106],[100,120],[110,146],[122,150],[132,135],[150,115],[170,108],[187,130],
  [205,116],[230,104],[250,90],[290,72],[320,78],[350,78],[385,72],[400,44],[450,24],[540,20],[600,16],
  [640,56],[670,38],[703,46],[730,20],[780,13],[840,18],[880,38],[905,48],[925,82],[945,66],[965,78],[990,46],
  [1030,30],[1060,46],[1100,66],[1130,58],[1155,72],[1180,64],[1215,56],[1240,15],[1270,8],[1330,30],[1390,12],
  [1430,36],[1460,56],[1480,68],[1505,52],[1540,30],[1580,10],[1615,26],[1650,3]
];
const spikes = { 79: 200, 183: 208, 235: 166, 288: 130, 706: 186, 837: 60, 967: 128, 1490: 120 };

function line(cls, x1, y1, x2, y2, w = 1) {
  return `<line class="${cls}" x1="${x1}" y1="${y1}" x2="${x2}" y2="${y2}" stroke-width="${w}"/>`;
}

function label(x, y, text, anchor) {
  return `<text x="${x}" y="${y}" text-anchor="${anchor}">${text}</text>`;
}

function drawProfile(right, top) {
  let d = `M${right} ${top}`;
  for (let y = 20; y <= 1650; y += 2) {
    const i = profile.findIndex(p => p[0] >= y);
    const b = profile[i], a = profile[Math.max(i - 1, 0)];
    const t = b[0] === a[0] ? 0 : (y - a[0]) / (b[0] - a[0]);
    let w = a[1] + (b[1] - a[1]) * t;
    // uneven outer edge
    const n = Math.abs(Math.sin(y * 12.9898) * 43758.5453) % 1;
    w *= 0.82 + 0.3 * n * n;
    for (const s in spikes) if (Math.abs(s - y) <= 1) w = spikes[s];
    const py = top + (y - 20) / UNIT;
    d += `H${(right - w / UNIT).toFixed(1)}V${(py + .7).toFixed(1)}`;
  }
  return `<path class="profile" d="${d}H${right}Z"/>`;
}

function drawChart(id, o) {
  const box = document.getElementById(id);
  const W = box.clientWidth, H = box.clientHeight;
  const right = W - o.axis, bottom = H - 14;
  let s = '';

  o.times.forEach(t => s += line('grid', t[0], 0, t[0], bottom));
  for (let y = o.firstY, n = 0; y < bottom; y = o.firstY + ++n * o.stepY) {
    s += line('grid', o.left, Math.round(y) + .5, right, Math.round(y) + .5);
  }
  s += line('grid', o.left, .5, right, .5) + line('grid', o.left, bottom, right, bottom);
  s += line('grid', o.left, 0, o.left, bottom) + line('grid', right + .5, 0, right + .5, bottom);
  if (o.profile) s += drawProfile(right, 1);

  s += line('cross', o.crossX, 0, o.crossX, bottom);
  if (o.crossY) s += line('cross', o.left, o.crossY, right, o.crossY);

  o.candles.forEach((c, i) => {
    const x = (o.firstX + i * o.stepX).toFixed(2);
    const [top, end, high, low] = c.slice(1).map(v => (v / UNIT - o.offset).toFixed(1));
    const cls = c[0] ? 'candle-up' : 'candle-down';
    s += line(cls + ' wick', x, high, x, low);
    s += line(cls, x, top, x, end, o.body);
  });
  s += line('last', o.left, o.lastY, right, o.lastY);

  for (let y = o.firstY - o.stepY, p = o.firstPrice + o.stepPrice; y < bottom + 3; y += o.stepY, p -= o.stepPrice) {
    s += label(W - 3, Math.round(y) + 3, p.toFixed(2), 'end');
  }
  if (o.crossY) {
    s += `<rect class="tag-cross" x="${right}" y="${o.crossY - 6}" width="41" height="11"/>`;
    s += label(W - 3, o.crossY + 3, o.crossPrice, 'end');
  }
  s += `<rect class="tag-last" x="${right}" y="${o.lastY - 5}" width="41" height="10" rx="1"/>`;
  s += label(W - 3, o.lastY + 3, o.lastPrice, 'end');

  s += `<rect class="axis-bg" x="0" y="${bottom + 1}" width="${W}" height="14"/>`;
  o.times.forEach(t => { if (t[1]) s += label(t[0], H - 4, t[1], 'middle'); });
  s += `<rect class="tag-cross" x="${o.crossX - 55}" y="${H - 14}" width="110" height="13" rx="3"/>`;
  s += label(o.crossX, H - 4, o.crossTime, 'middle');

  box.innerHTML = `<svg width="${W}" height="${H}">${s}</svg>`;
}

drawChart('chart-nq', {
  candles: nq, profile: true, left: 3, axis: 43, offset: 7,
  firstX: 4, stepX: 3.37, body: 2.2,
  firstY: 19, stepY: 17.42, firstPrice: 24620, stepPrice: 10,
  crossX: 165.5, crossY: 288.5, crossPrice: '24465.75', crossTime: '03/20/2026 12:35:00 pm',
  lastY: 350.5, lastPrice: '24430.00',
  times: [[20.5, '9:00 am'], [61.5], [101.5, '11:00 am'], [142.5], [206.5, '1:00 pm'], [246.5]]
});

drawChart('chart-mnq', {
  candles: mnq, left: 3, axis: 44, offset: 1,
  firstX: 4.5, stepX: 2.638, body: 1.9,
  firstY: 10, stepY: 36.25, firstPrice: 24470, stepPrice: 5,
  crossX: 494.5, lastY: 295, lastPrice: '24430.75', crossTime: '03/20/2026 12:43:20 pm',
  times: [[75.5, '12:05 pm'], [131.5, '12:10 pm'], [176.5], [228.5, '12:20 pm'], [286.5, '12:25 pm'], [329.5],
    [392.5, '12:35 pm'], [555.5, '12:48 pm'], [618.5, '12:53 pm'], [682.5, '12:58 pm'],
    [745.5, '1:03 pm'], [808.5, '1:08 pm'], [871.5, '1:13 pm']]
});
```
